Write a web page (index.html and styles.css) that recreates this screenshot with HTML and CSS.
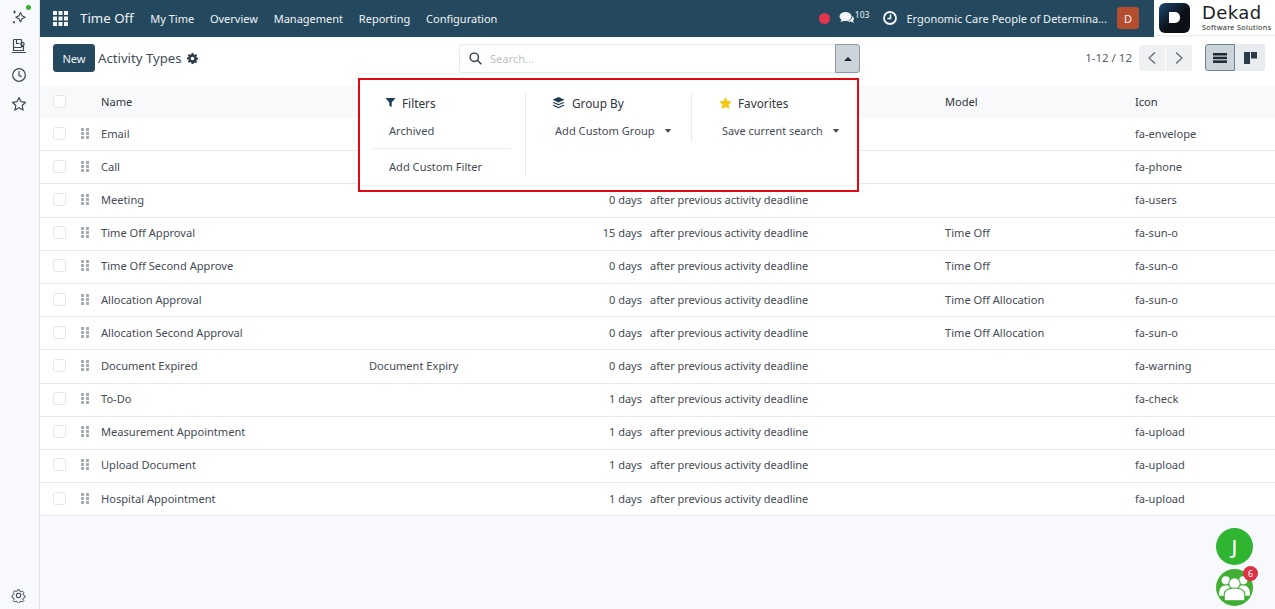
FILE: index.html
```html
<!DOCTYPE html>
<html lang="en">
	<head>
		<meta charset="UTF-8" />
		<title>Activity Types</title>
		<link rel="stylesheet" href="styles.css">
	</head>
	<body>
		<div class="app">
			<aside class="side-rail">
				<div class="rail-top">
					<span class="rail-icon rail-spark">
						<svg viewBox="0 0 16 16" width="16" height="16" fill="none" stroke="#3d4654" stroke-width="1.1"><path d="M9.5 3.5 11 6.800l3.200 1.400L11 9.700l-1.500 3.200L8 9.700 4.800 8.200 8 6.800z" stroke-linejoin="round"/><path d="M3.500 1.500v3M2 3h3M3 12v2.500M1.800 13.200h2.400" stroke-width="1"/></svg>
						<span class="online-dot"></span>
					</span>
					<span class="rail-icon">
						<svg viewBox="0 0 16 16" width="16" height="16" fill="none" stroke="#3d4654" stroke-width="1.2"><rect x="2.500" y="1.500" width="8" height="8" rx=".8"/><path d="M5.500 1.500v4h3M2.500 9.500v3h10v-4h-2M1 14.500h14"/><circle cx="11.500" cy="6" r="1.600"/></svg>
					</span>
					<span class="rail-icon">
						<svg viewBox="0 0 16 16" width="16" height="16" fill="none" stroke="#3d4654" stroke-width="1.2"><circle cx="8" cy="8" r="6.300"/><path d="M8 4v4.300l2.600 1.500"/></svg>
					</span>
					<span class="rail-icon">
						<svg viewBox="0 0 16 16" width="16" height="16" fill="none" stroke="#3d4654" stroke-width="1.2" stroke-linejoin="round"><path d="M8 1.500l2 4.200 4.600.6-3.400 3.200.9 4.600L8 11.800l-4.100 2.300.9-4.600L1.400 6.300 6 5.700z"/></svg>
					</span>
				</div>
				<span class="rail-icon">
					<svg viewBox="0 0 16 16" width="15" height="15" fill="none" stroke="#3d4654" stroke-width="1.1" stroke-linejoin="round"><circle cx="8" cy="8" r="2.300"/><path d="M6.800 1.200h2.400l.4 2 1.300.6 1.800-1 1.600 1.800-1.100 1.600.5 1.400 2 .5v2.400l-2 .5-.5 1.300 1.100 1.700-1.600 1.700-1.800-1-1.300.5-.4 2H6.800l-.4-2-1.300-.5-1.800 1-1.600-1.700 1.100-1.700-.5-1.300-2-.5V7.600l2-.5.5-1.400-1.100-1.600 1.600-1.800 1.800 1 1.300-.6z" transform="translate(.8 .8) scale(.9)"/></svg>
				</span>
			</aside>
			<div class="main">
				<header class="top-bar">
					<nav class="top-nav">
						<svg class="apps-icon" viewBox="0 0 15 15" width="15" height="15" fill="#f4f6f7"><rect width="4" height="4"/><rect x="5.500" width="4" height="4"/><rect x="11" width="4" height="4"/><rect y="5.500" width="4" height="4"/><rect x="5.500" y="5.500" width="4" height="4"/><rect x="11" y="5.500" width="4" height="4"/><rect y="11" width="4" height="4"/><rect x="5.500" y="11" width="4" height="4"/><rect x="11" y="11" width="4" height="4"/></svg>
						<span class="app-name">Time Off</span>
						<a class="nav-link">My Time</a>
						<a class="nav-link">Overview</a>
						<a class="nav-link">Management</a>
						<a class="nav-link">Reporting</a>
						<a class="nav-link">Configuration</a>
					</nav>
					<div class="top-status">
						<span class="red-dot"></span>
						<span class="chat-count">
							<svg viewBox="0 0 16 14" width="16" height="14" fill="#f4f6f7"><ellipse cx="6.500" cy="5.500" rx="6" ry="4.500"/><path d="M3 8l-1.500 3L6 9.500z"/><path d="M13.500 5c1.500 1 2 3.500.5 4.800l.8 2.200-3-1.400c-1.300.3-2.700.1-3.800-.6 3-.2 5.500-2 5.500-5z"/></svg>
							<sup class="chat-num">103</sup>
						</span>
						<svg class="clock-icon" viewBox="0 0 14 14" width="14" height="14"><circle cx="7" cy="7" r="6" fill="none" stroke="#f4f6f7" stroke-width="1.800"/><path d="M7.500 3.500v4H4.500" fill="none" stroke="#f4f6f7" stroke-width="1.500"/></svg>
						<span class="company-name">Ergonomic Care People of Determina...</span>
						<span class="user-badge">D</span>
					</div>
				</header>
				<div class="logo-box">
					<span class="logo-mark">
						<span class="logo-d"></span>
					</span>
					<span class="logo-text">
						<span class="logo-title">Dekad</span>
						<span class="logo-sub">Software Solutions</span>
					</span>
				</div>
				<section class="control-panel">
					<div class="panel-left">
						<button class="new-button">New</button>
						<span class="page-title">Activity Types</span>
						<svg viewBox="0 0 12 12" width="11" height="11" fill="#2b3a48"><path fill-rule="evenodd" d="M5 0h2l.3 1.600 1.200.5L9.900 1.200 11 2.600l-.9 1.300.4 1.100L12 5.300v1.800l-1.500.3-.4 1.100.9 1.300-1.100 1.400-1.400-.9-1.200.5L7 12H5l-.3-1.700-1.200-.5-1.400.9L1 9.300l.9-1.300-.4-1.100L0 6.700V5l1.500-.3.4-1.100L1 2.400l1.100-1.300 1.400.9 1.200-.5zM6 4a2 2 0 1 0 0 4 2 2 0 0 0 0-4z"/></svg>
					</div>
					<div class="search-box">
						<svg viewBox="0 0 14 14" width="13" height="13" fill="none" stroke="#2b3a48" stroke-width="1.500"><circle cx="5.700" cy="5.700" r="4.500"/><path d="M9 9l4.300 4.300"/></svg>
						<span class="search-text">Search...</span>
						<span class="search-toggle"><span class="caret-up"></span></span>
					</div>
					<div class="panel-right">
						<span class="pager-text">1-12 / 12</span>
						<span class="pager-buttons">
							<span class="pager-btn"><svg viewBox="0 0 10 14" width="10" height="14" fill="none" stroke="#5f6670" stroke-width="1.200"><path d="M8 1.500 2 7l6 5.500"/></svg></span>
							<span class="pager-btn"><svg viewBox="0 0 10 14" width="10" height="14" fill="none" stroke="#5f6670" stroke-width="1.200"><path d="M2 1.500 8 7l-6 5.500"/></svg></span>
						</span>
						<span class="view-buttons">
							<span class="view-btn view-active"><svg viewBox="0 0 14 10" width="14" height="10" fill="#1f2a36"><rect width="14" height="2.500"/><rect y="3.700" width="14" height="2.500"/><rect y="7.400" width="14" height="2.600"/></svg></span>
							<span class="view-btn"><svg viewBox="0 0 13 12" width="13" height="12" fill="#2b3a48"><rect width="6" height="12"/><rect x="7" width="6" height="6.500"/></svg></span>
						</span>
					</div>
				</section>
				<section class="list-view">
					<div class="list-row list-head">
						<span class="check-box"></span>
						<span class="col-handle"></span>
						<span class="col-name">Name</span>
						<span class="col-summary"></span>
						<span class="col-days"></span>
						<span class="col-model">Model</span>
						<span class="col-icon">Icon</span>
					</div>
					<div class="list-row"><span class="check-box"></span><span class="col-handle"><span class="grip"></span></span><span class="col-name">Email</span><span class="col-summary"></span><span class="col-days"></span><span class="col-model"></span><span class="col-icon">fa-envelope</span></div>
					<div class="list-row"><span class="check-box"></span><span class="col-handle"><span class="grip"></span></span><span class="col-name">Call</span><span class="col-summary"></span><span class="col-days"></span><span class="col-model"></span><span class="col-icon">fa-phone</span></div>
					<div class="list-row"><span class="check-box"></span><span class="col-handle"><span class="grip"></span></span><span class="col-name">Meeting</span><span class="col-summary"></span><span class="col-days"><b>0 days</b>after previous activity deadline</span><span class="col-model"></span><span class="col-icon">fa-users</span></div>
					<div class="list-row"><span class="check-box"></span><span class="col-handle"><span class="grip"></span></span><span class="col-name">Time Off Approval</span><span class="col-summary"></span><span class="col-days"><b>15 days</b>after previous activity deadline</span><span class="col-model">Time Off</span><span class="col-icon">fa-sun-o</span></div>
					<div class="list-row"><span class="check-box"></span><span class="col-handle"><span class="grip"></span></span><span class="col-name">Time Off Second Approve</span><span class="col-summary"></span><span class="col-days"><b>0 days</b>after previous activity deadline</span><span class="col-model">Time Off</span><span class="col-icon">fa-sun-o</span></div>
					<div class="list-row"><span class="check-box"></span><span class="col-handle"><span class="grip"></span></span><span class="col-name">Allocation Approval</span><span class="col-summary"></span><span class="col-days"><b>0 days</b>after previous activity deadline</span><span class="col-model">Time Off Allocation</span><span class="col-icon">fa-sun-o</span></div>
					<div class="list-row"><span class="check-box"></span><span class="col-handle"><span class="grip"></span></span><span class="col-name">Allocation Second Approval</span><span class="col-summary"></span><span class="col-days"><b>0 days</b>after previous activity deadline</span><span class="col-model">Time Off Allocation</span><span class="col-icon">fa-sun-o</span></div>
					<div class="list-row"><span class="check-box"></span><span class="col-handle"><span class="grip"></span></span><span class="col-name">Document Expired</span><span class="col-summary">Document Expiry</span><span class="col-days"><b>0 days</b>after previous activity deadline</span><span class="col-model"></span><span class="col-icon">fa-warning</span></div>
					<div class="list-row"><span class="check-box"></span><span class="col-handle"><span class="grip"></span></span><span class="col-name">To-Do</span><span class="col-summary"></span><span class="col-days"><b>1 days</b>after previous activity deadline</span><span class="col-model"></span><span class="col-icon">fa-check</span></div>
					<div class="list-row"><span class="check-box"></span><span class="col-handle"><span class="grip"></span></span><span class="col-name">Measurement Appointment</span><span class="col-summary"></span><span class="col-days"><b>1 days</b>after previous activity deadline</span><span class="col-model"></span><span class="col-icon">fa-upload</span></div>
					<div class="list-row"><span class="check-box"></span><span class="col-handle"><span class="grip"></span></span><span class="col-name">Upload Document</span><span class="col-summary"></span><span class="col-days"><b>1 days</b>after previous activity deadline</span><span class="col-model"></span><span class="col-icon">fa-upload</span></div>
					<div class="list-row"><span class="check-box"></span><span class="col-handle"><span class="grip"></span></span><span class="col-name">Hospital Appointment</span><span class="col-summary"></span><span class="col-days"><b>1 days</b>after previous activity deadline</span><span class="col-model"></span><span class="col-icon">fa-upload</span></div>
				</section>
				<div class="search-menu">
					<div class="menu-col menu-filters">
						<div class="menu-head">
							<svg viewBox="0 0 12 12" width="11" height="11" fill="#1f3d52"><path d="M.5 1h11L7.300 6v5L4.700 9.500V6z"/></svg>
							<span>Filters</span>
						</div>
						<div class="menu-item">Archived</div>
						<div class="menu-sep"></div>
						<div class="menu-item">Add Custom Filter</div>
					</div>
					<div class="menu-col menu-group">
						<div class="menu-head">
							<svg viewBox="0 0 14 13" width="13" height="12" fill="#1f3d52"><path d="M7 0l6.500 3L7 6 .5 3z"/><path d="M1.800 5.300 7 7.700l5.200-2.400 1.300.8L7 9 .5 6.100z"/><path d="M1.800 8.300 7 10.700l5.200-2.400 1.300.8L7 12.100.5 9.100z"/></svg>
							<span>Group By</span>
						</div>
						<div class="menu-item">Add Custom Group<span class="caret-down"></span></div>
					</div>
					<div class="menu-col menu-favs">
						<div class="menu-head">
							<svg viewBox="0 0 14 13" width="13" height="12" fill="#f3c90f"><path d="M7 0l2.100 4.300 4.700.6-3.400 3.300.8 4.700L7 10.700l-4.200 2.200.8-4.700L.2 4.900l4.700-.6z"/></svg>
							<span>Favorites</span>
						</div>
						<div class="menu-item">Save current search<span class="caret-down"></span></div>
					</div>
				</div>
				<div class="chat-bubbles">
					<span class="bubble">J</span>
					<span class="bubble bubble-group">
						<svg viewBox="0 0 36 36" width="37" height="37" fill="#fff"><circle cx="9.500" cy="11" r="4"/><circle cx="26.500" cy="11" r="4"/><path d="M3 24c0-5 2.500-8 6-8h18c3.500 0 6 3 6 8v2H3z"/><circle cx="18" cy="14" r="5.500" stroke="#3fae32"/><path d="M8 31v-6c0-4.500 3.500-6.500 10-6.500s10 2 10 6.500v6z" stroke="#3fae32"/></svg>
						<span class="bubble-count">6</span>
					</span>
				</div>
			</div>
		</div>
	</body>
</html>
```
FILE: styles.css
```css
* {
	box-sizing: border-box;
}
html,
body {
	margin: 0;
	height: 100%;
	overflow: hidden;
}
body {
	font-family: "Noto Sans", "Open Sans", sans-serif;
	font-size: 11.100px;
	color: #444b55;
	background-color: #f8f9fc;
}
.app {
	display: flex;
	height: 609px;
}

/* left icons */
.side-rail {
	width: 40px;
	flex: none;
	display: flex;
	flex-direction: column;
	justify-content: space-between;
	align-items: center;
	padding: 9px 2px 6px 0;
	border-right: 1px solid #dfe1e5;
	background-color: #f8f9fc;
}
.rail-top {
	display: flex;
	flex-direction: column;
	gap: 13px;
}
.rail-icon {
	position: relative;
	display: flex;
	width: 16px;
	height: 16px;
	align-items: center;
	justify-content: center;
}
.online-dot {
	position: absolute;
	top: -4px;
	right: -4px;
	width: 5px;
	height: 5px;
	border-radius: 50%;
	background-color: #34b233;
}

/* main column */
.main {
	position: relative;
	flex: 1;
	display: flex;
	flex-direction: column;
	min-width: 0;
}
.top-bar {
	height: 37px;
	flex: none;
	width: 1114px;
	display: flex;
	justify-content: space-between;
	align-items: center;
	padding: 0 15px 1px 13px;
	background-color: #24495e;
	color: #f0f3f5;
}
.top-nav,
.top-status {
	display: flex;
	align-items: center;
}
.app-name {
	font-size: 13.300px;
	margin-left: 12px;
	margin-right: 9px;
}
.nav-link {
	font-size: 11px;
	margin-left: 7.500px;
	margin-right: 8.300px;
}
.red-dot {
	width: 11px;
	height: 11px;
	border-radius: 50%;
	background-color: #e5354d;
	margin-right: 9px;
}
.chat-count {
	display: flex;
	align-items: center;
	margin-right: 14px;
}
.chat-num {
	font-size: 8.500px;
	line-height: 1;
	margin-bottom: 6px;
}
.company-name {
	font-size: 11px;
	margin-left: 9px;
	margin-right: 10px;
}
.user-badge {
	width: 22px;
	height: 22px;
	display: flex;
	align-items: center;
	justify-content: center;
	border-radius: 3px;
	background-color: #b54d2f;
	font-size: 11px;
}
.logo-box {
	position: absolute;
	top: 0;
	right: 0;
	width: 121px;
	height: 36px;
	display: flex;
	align-items: center;
	padding-left: 5px;
	background-color: #fff;
	border-bottom: 1px solid #eee;
}
.logo-mark {
	width: 31px;
	height: 30px;
	flex: none;
	display: flex;
	align-items: center;
	justify-content: center;
	border-radius: 6px;
	background: linear-gradient(135deg, #1d4a78, #0c0f16 55%);
}
.logo-d {
	width: 11px;
	height: 11px;
	background-color: #fff;
	border-radius: 0 5px 5px 0;
}
.logo-text {
	display: flex;
	flex-direction: column;
	margin-left: 12px;
	color: #1c1f24;
}
.logo-title {
	font-family: "DejaVu Sans", sans-serif;
	font-size: 18px;
	line-height: 20px;
	letter-spacing: .4px;
}
.logo-sub {
	font-size: 7.300px;
	line-height: 9px;
	letter-spacing: .3px;
}

/* control panel */
.control-panel {
	height: 49px;
	flex: none;
	display: flex;
	align-items: flex-start;
	background-color: #fff;
	padding: 7px 10px 0 13px;
}
.panel-left {
	width: 406px;
	height: 28px;
	display: flex;
	align-items: center;
}
.new-button {
	width: 42px;
	height: 28px;
	border: 1px solid #24495e;
	border-radius: 3px;
	background-color: #24495e;
	color: #f0f3f5;
	font: inherit;
	padding: 0;
	margin-right: 3px;
}
.page-title {
	font-size: 13.200px;
	color: #444b55;
	margin-right: 5px;
}
.search-box {
	width: 401px;
	height: 29px;
	display: flex;
	align-items: center;
	padding-left: 9px;
	border: 1px solid #e7e9ed;
	border-radius: 3px;
}
.search-text {
	flex: 1;
	margin-left: 8px;
	color: #bdc1c7;
}
.search-toggle {
	width: 25px;
	height: 29px;
	margin-right: -1px;
	display: flex;
	align-items: center;
	justify-content: center;
	background-color: #ccd4db;
	border: 1px solid #8d9aa6;
	border-radius: 0 3px 3px 0;
}
.caret-up {
	border-left: 4px solid transparent;
	border-right: 4px solid transparent;
	border-bottom: 4px solid #1a2530;
}
.panel-right {
	flex: 1;
	display: flex;
	justify-content: flex-end;
	align-items: center;
}
.pager-text {
	font-size: 11.500px;
	color: #555c66;
	margin-right: 7px;
}
.pager-buttons {
	display: flex;
	margin-right: 13px;
	gap: 1px;
}
.pager-btn {
	width: 26px;
	height: 26px;
	display: flex;
	align-items: center;
	justify-content: center;
	background-color: #eff0f2;
}
.pager-btn:first-child {
	border-radius: 3px 0 0 3px;
}
.pager-btn:last-child {
	border-radius: 0 3px 3px 0;
}
.view-buttons {
	display: flex;
}
.view-btn {
	width: 30px;
	height: 27px;
	display: flex;
	align-items: center;
	justify-content: center;
	background-color: #e9ecef;
	border-radius: 0 3px 3px 0;
}
.view-active {
	background-color: #ccd4db;
	border: 1px solid #6f8291;
	border-radius: 3px 0 0 3px;
}

/* list */
.list-view {
	background-color: #fff;
}
.list-row {
	height: 33.200px;
	display: flex;
	align-items: center;
	padding: 0 0 2px 13px;
	border-bottom: 1px solid #e7e9ed;
	background-color: #fff;
}
.list-head {
	height: 32px;
	border-bottom: 0;
	background-color: #f8f9fb;
	color: #2f353d;
}
.check-box {
	width: 13px;
	height: 13px;
	flex: none;
	border: 1px solid #e3e5e9;
	border-radius: 3px;
	background-color: #fff;
}
.col-handle {
	width: 35px;
	flex: none;
	display: flex;
	justify-content: center;
	padding-left: 3px;
}
.grip {
	width: 8px;
	height: 11px;
	background-image: radial-gradient(circle at 1.500px 1.500px, #a3abb4 1.400px, transparent 1.600px);
	background-size: 5px 4px;
}
.col-name {
	width: 268px;
	flex: none;
}
.col-summary {
	width: 222px;
	flex: none;
}
.col-days {
	width: 354px;
	flex: none;
	font-size: 11px;
}
.col-days b {
	display: inline-block;
	width: 51px;
	text-align: right;
	font-weight: 400;
	margin-right: 8px;
}
.col-model {
	width: 190px;
	flex: none;
}
.col-icon {
	flex: 1;
}

/* open search panel, sits on top of the list */
.search-menu {
	position: absolute;
	top: 78px;
	left: 318px;
	width: 501px;
	height: 114px;
	display: flex;
	background-color: #fff;
	border: 2.500px solid #e30613;
	color: #444b55;
	padding-top: 12.500px;
}
.menu-col {
	display: flex;
	flex-direction: column;
}
.menu-filters {
	width: 166px;
	height: 84px;
	padding: 0 14px 0 12px;
	border-right: 1px solid #e7e9ed;
}
.menu-group {
	width: 166px;
	height: 48px;
	padding-left: 26px;
	border-right: 1px solid #e7e9ed;
}
.menu-favs {
	flex: 1;
	padding-left: 27px;
	font-size: 10.900px;
}
.menu-head {
	display: flex;
	align-items: center;
	gap: 7px;
	font-size: 11.800px;
	color: #2f353d;
	height: 20px;
	line-height: 20px;
}
.menu-filters .menu-head {
	gap: 6px;
	padding-left: 13px;
}
.menu-favs .menu-head {
	gap: 6px;
}
.menu-item {
	margin-top: 9px;
	line-height: 18px;
	white-space: nowrap;
	padding-left: 3px;
}
.menu-filters .menu-item {
	padding-left: 17px;
}
.menu-sep {
	height: 1px;
	margin-top: 8px;
	background-color: #eceef1;
}
.caret-down {
	display: inline-block;
	vertical-align: middle;
	margin-left: 10px;
	margin-bottom: 2px;
	border-left: 3.500px solid transparent;
	border-right: 3.500px solid transparent;
	border-top: 4px solid #444b55;
}

/* chat bubbles bottom right */
.chat-bubbles {
	position: absolute;
	right: 22px;
	bottom: 3px;
	display: flex;
	flex-direction: column;
	gap: 4px;
}
.bubble {
	position: relative;
	width: 37px;
	height: 37px;
	display: flex;
	align-items: center;
	justify-content: center;
	border-radius: 50%;
	background-color: #2fb52f;
	color: #fff;
	font-size: 20px;
	font-weight: 500;
}
.bubble-group {
	background-color: #3fae32;
}
.bubble-count {
	position: absolute;
	top: -3px;
	right: -5px;
	width: 15px;
	height: 15px;
	display: flex;
	align-items: center;
	justify-content: center;
	border-radius: 50%;
	background-color: #dd3246;
	font-size: 9px;
	font-weight: 400;
}
```
